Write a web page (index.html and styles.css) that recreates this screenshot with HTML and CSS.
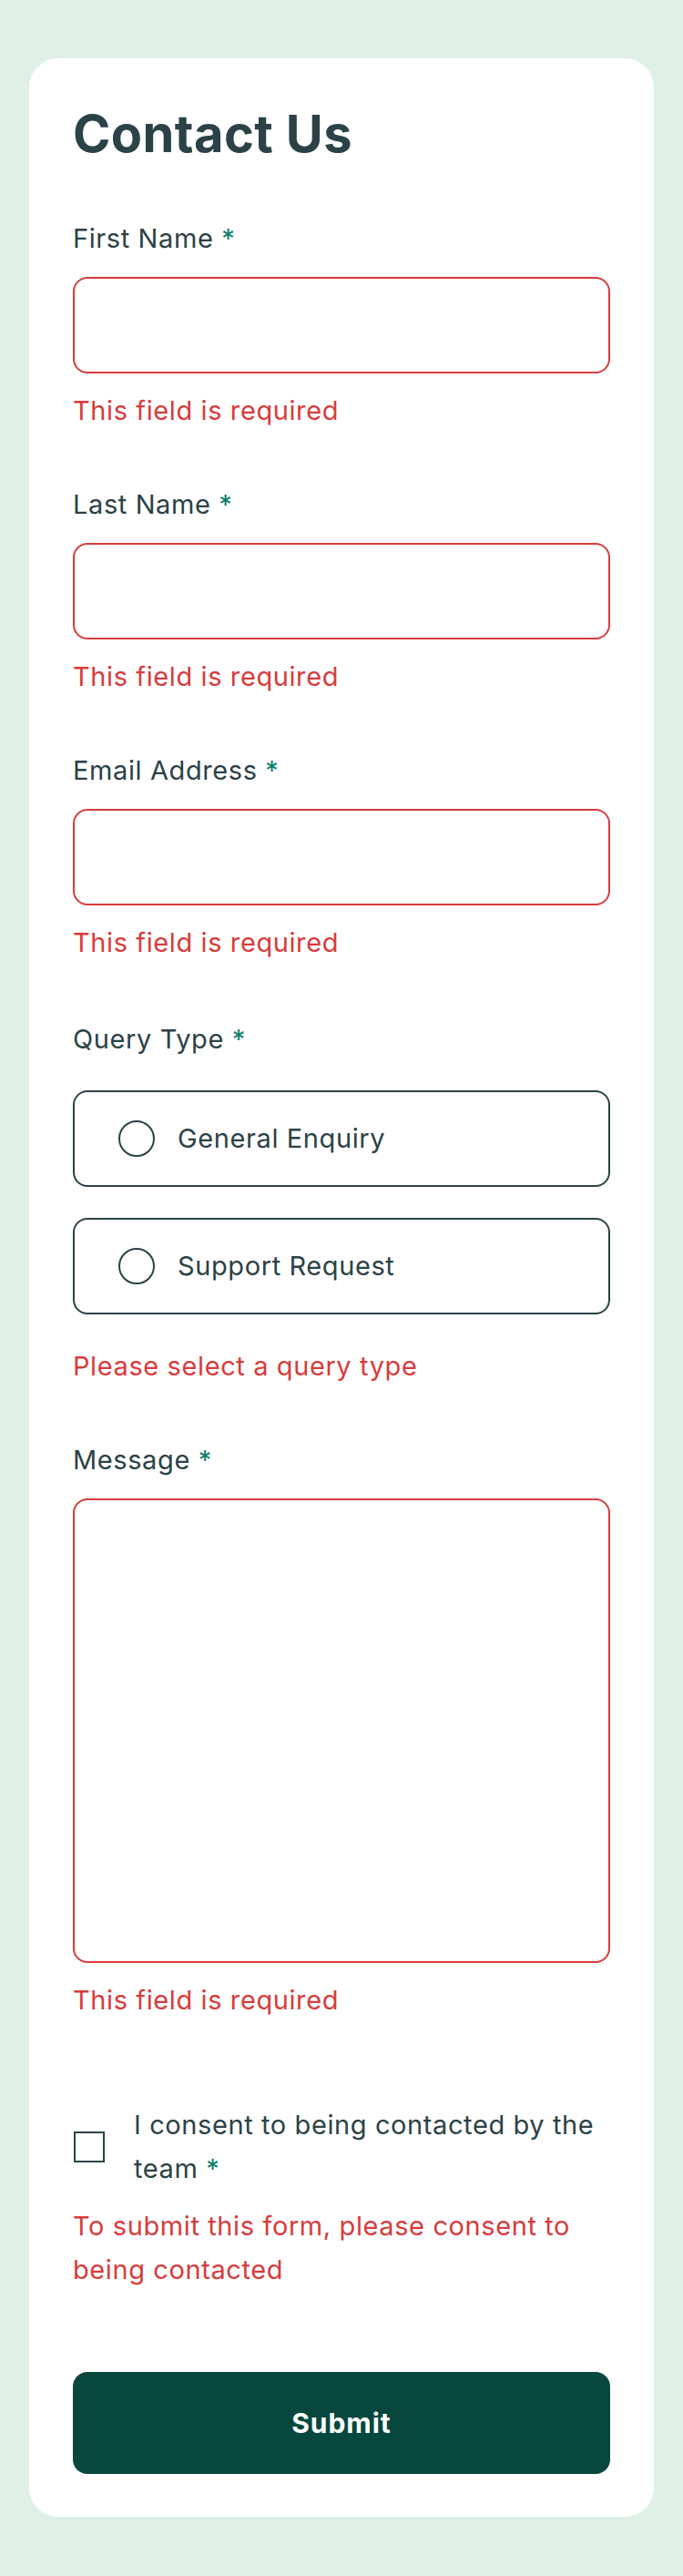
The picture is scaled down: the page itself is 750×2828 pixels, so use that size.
FILE: index.html
```html
<!DOCTYPE html>
<html lang="en">
<head>
<meta charset="utf-8">
<title>Contact Us</title>
<link rel="stylesheet" href="styles.css">
</head>
<body>
<main class="page">
  <form class="card" novalidate>
    <h1 class="title">Contact Us</h1>

    <div class="field field-first">
      <label class="label" for="first">First Name <span class="req">*</span></label>
      <input class="input" id="first" type="text">
      <p class="error">This field is required</p>
    </div>

    <div class="field">
      <label class="label" for="last">Last Name <span class="req">*</span></label>
      <input class="input" id="last" type="text">
      <p class="error">This field is required</p>
    </div>

    <div class="field">
      <label class="label" for="email">Email Address <span class="req">*</span></label>
      <input class="input" id="email" type="email">
      <p class="error">This field is required</p>
    </div>

    <div class="group" role="radiogroup" aria-labelledby="qt">
      <p class="label label-group" id="qt">Query Type <span class="req">*</span></p>
      <label class="option">
        <input class="radio" type="radio" name="query" value="general">
        <span class="option-text">General Enquiry</span>
      </label>
      <label class="option option-next">
        <input class="radio" type="radio" name="query" value="support">
        <span class="option-text">Support Request</span>
      </label>
      <p class="error error-group">Please select a query type</p>
    </div>

    <div class="field">
      <label class="label" for="msg">Message <span class="req">*</span></label>
      <textarea class="input textarea" id="msg"></textarea>
      <p class="error">This field is required</p>
    </div>

    <div class="consent">
      <label class="consent-row">
        <input class="check" type="checkbox">
        <span class="consent-text"><span class="consent-line">I consent to being contacted by the</span> <span class="consent-line">team <span class="req">*</span></span></span>
      </label>
      <p class="error error-consent">To submit this form, please consent to being contacted</p>
    </div>

    <button class="submit" type="submit">Submit</button>
  </form>
</main>
</body>
</html>
```
FILE: styles.css
```css
* {
  box-sizing: border-box;
}

body {
  margin: 0;
  background: #dff1e7;
  font-family: "Inter", "Noto Sans", sans-serif;
  color: #2b4246;
}

.page {
  padding: 64px 32px 65px;
}

.card {
  display: flex;
  flex-direction: column;
  background: #ffffff;
  border-radius: 32px;
  padding: 48px 48px 47px;
}

.title {
  margin: 0;
  font-size: 56px;
  line-height: 70px;
  font-weight: 700;
  letter-spacing: 0.4px;
  color: #2b4246;
}

.field {
  display: flex;
  flex-direction: column;
  margin-top: 55px;
}

.field-first {
  margin-top: 56px;
}

.label {
  display: block;
  margin: 0 0 18px;
  font-size: 29px;
  line-height: 48px;
  letter-spacing: 0.6px;
  color: #2b4246;
}

.req {
  color: #0c7d69;
}

.input {
  display: block;
  width: 100%;
  height: 106px;
  margin: 0;
  padding: 0 32px;
  border: 2px solid #d73c3c;
  border-radius: 16px;
  background: #ffffff;
  font: inherit;
  font-size: 29px;
  color: #2b4246;
  outline: none;
}

.textarea {
  height: 510px;
  padding: 24px 32px;
  resize: none;
}

.error {
  margin: 17px 0 0;
  font-size: 29px;
  line-height: 48px;
  letter-spacing: 0.6px;
  color: #d73c3c;
}

.group {
  display: flex;
  flex-direction: column;
  margin-top: 58px;
}

.label-group {
  margin-bottom: 32px;
}

.option {
  display: flex;
  align-items: center;
  gap: 25px;
  height: 106px;
  padding-left: 48px;
  border: 2px solid #2b4246;
  border-radius: 16px;
  cursor: pointer;
}

.option-next {
  margin-top: 34px;
}

.radio {
  appearance: none;
  -webkit-appearance: none;
  flex: none;
  width: 40px;
  height: 40px;
  margin: 0;
  border: 2px solid #2b4246;
  border-radius: 50%;
  background: #ffffff;
}

.option-text {
  font-size: 29px;
  line-height: 48px;
  letter-spacing: 0.6px;
  color: #2b4246;
}

.error-group {
  margin-top: 32.5px;
}

.consent {
  display: flex;
  flex-direction: column;
  margin-top: 89px;
}

.consent-row {
  display: flex;
  align-items: center;
  gap: 32px;
  cursor: pointer;
}

.check {
  appearance: none;
  -webkit-appearance: none;
  flex: none;
  width: 34px;
  height: 34px;
  margin: 0 0 0 1px;
  border: 2px solid #2b4246;
  border-radius: 0;
  background: #ffffff;
}

.consent-text {
  font-size: 29px;
  line-height: 48px;
  letter-spacing: 0.6px;
  color: #2b4246;
}

.consent-line {
  white-space: nowrap;
}

.error-consent {
  margin-top: 15px;
}

.submit {
  display: block;
  width: 100%;
  height: 112px;
  margin: 88.5px 0 0;
  border: 0;
  border-radius: 16px;
  background: #07473d;
  color: #ffffff;
  font-family: "Inter", "Noto Sans", sans-serif;
  font-size: 30px;
  font-weight: 700;
  letter-spacing: 1px;
  cursor: pointer;
}
```
